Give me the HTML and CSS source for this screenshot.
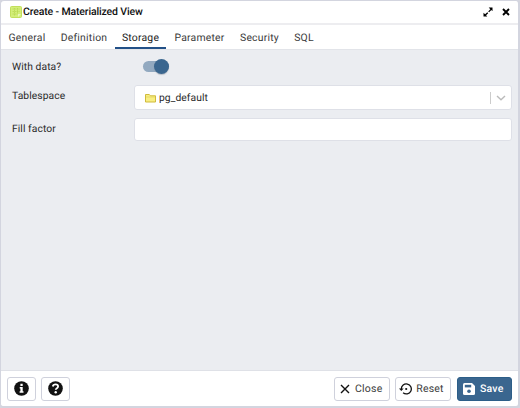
FILE: index.html
```html
<!DOCTYPE html>
<html lang="en">
<head>
<meta charset="utf-8">
<title>Create - Materialized View</title>
<link rel="stylesheet" href="styles.css">
</head>
<body>
<div class="dialog">
  <header class="titlebar">
    <svg class="view-icon" viewBox="0 0 12 12"><path d="M1.500 .5h9q1 0 1 1v9q0 1-1 1h-9q-1 0-1-1v-9q0-1 1-1z" fill="#d3ee78" stroke="#c1df5c"/><path d="M2.500 3h7M2.500 5.500h7M2.500 8h5M4.500 2v8M7.500 2v6" stroke="#b4d64d" stroke-width=".7" stroke-dasharray="1.500 .5" fill="none"/><path d="M8 11V8h3z" fill="#eaf7bd"/></svg>
    <h1 class="title">Create - Materialized View</h1>
    <button class="tool" aria-label="Maximize"><svg width="10" height="10" viewBox="0 0 10 10"><path d="M5.700 .5h3.800v3.800L8.300 3.100 6.100 5.300l-.9-.9 2.100-2.200zM.5 5.700v3.800h3.800L3.100 8.300l2.100-2.100-.9-.9-2.200 2z"/></svg></button>
    <button class="tool" aria-label="Close dialog"><svg width="8" height="8" viewBox="0 0 8 8"><path d="M1 1l6 6M7 1L1 7" stroke="#000" stroke-width="1.900"/></svg></button>
  </header>
  <nav class="tabs">
    <a class="tab general">General</a>
    <a class="tab definition">Definition</a>
    <a class="tab storage active">Storage</a>
    <a class="tab parameter">Parameter</a>
    <a class="tab security">Security</a>
    <a class="tab sql">SQL</a>
  </nav>
  <main class="form">
    <div class="row row-switch"><span class="label">With data?</span><span class="switch"><span class="knob"></span></span></div>
    <div class="row row-select"><span class="label">Tablespace</span>
      <div class="field select">
        <svg class="folder" viewBox="0 0 11 10"><path d="M.5 9V1.500h3.800l1.200 1.300h5V9z" fill="#f8ee83" stroke="#d0bb3b"/><path d="M1 4h9" stroke="#e1d15b" stroke-width=".7"/></svg>
        <span class="value">pg_default</span>
        <span class="divider"></span>
        <svg class="chevron" viewBox="0 0 10 6"><path d="M1 1l4 3.800L9 1" fill="none" stroke="#bbb" stroke-width="1.400"/></svg>
      </div>
    </div>
    <div class="row row-input"><span class="label">Fill factor</span><div class="field"></div></div>
  </main>
  <footer class="footer">
    <button class="btn icon-btn" aria-label="Information"><svg width="15" height="15" viewBox="0 0 15 15"><circle cx="7.500" cy="7.500" r="7.300" fill="#111"/><path d="M6.400 2.800h2.300V5H6.400zM5.700 6.100h3v4.200h.8v1.500H5.600v-1.500h.8V7.600h-.7z" fill="#fff"/></svg></button>
    <button class="btn icon-btn" aria-label="Help"><svg width="15" height="15" viewBox="0 0 15 15"><circle cx="7.500" cy="7.500" r="7.300" fill="#111"/><path d="M4.800 5.500c.3-1.400 1.300-2.100 2.700-2.100 1.500 0 2.600.8 2.600 2.100 0 1.700-2.400 1.600-2.400 3.300" fill="none" stroke="#fff" stroke-width="1.800"/><circle cx="7.700" cy="11.200" r="1.200" fill="#fff"/></svg></button>
    <span class="spacer"></span>
    <button class="btn close"><svg width="10" height="10" viewBox="0 0 10 10"><path d="M1 1l8 8M9 1L1 9" stroke="#111" stroke-width="1.400"/></svg><span>Close</span></button>
    <button class="btn reset"><svg width="13" height="12" viewBox="0 0 13 12"><path d="M2.300 6a5 5 0 1 1 1.800 3.800" fill="none" stroke="#111" stroke-width="1.300"/><path d="M0 5.400h4.700L2.300 8z" fill="#111"/><circle cx="7.200" cy="6" r="1.100" fill="#111"/></svg><span>Reset</span></button>
    <button class="btn save"><svg width="12" height="12" viewBox="0 0 12 12"><path d="M1.500 0H9l3 3v7.500q0 1.500-1.500 1.500h-9Q0 12 0 10.500v-9Q0 0 1.500 0z" fill="#fff"/><path d="M1.800 1.800h6.400v2.600H1.800z" fill="#3a668f"/><circle cx="6" cy="8.300" r="1.800" fill="#3a668f"/></svg><span>Save</span></button>
  </footer>
</div>
</body>
</html>
```
FILE: styles.css
```css
* { box-sizing: border-box; }
body { margin: 0; background: #d6d7e0; font-family: Roboto, sans-serif; font-size: 10.3px; color: #2a2a2a; letter-spacing: .07px; text-rendering: geometricPrecision; }
button { font: inherit; letter-spacing: inherit; color: inherit; padding: 0; border: 0; background: none; text-rendering: inherit; }
svg { display: block; flex: none; }
.dialog { height: 408px; display: flex; flex-direction: column; border: solid #d3d5df; border-width: 1px 2px 2px 1px; border-radius: 4px; background: #fff; overflow: hidden; }
.titlebar { height: 24px; flex: none; display: flex; align-items: center; padding: 0 3px 0 9px; border-bottom: 2px solid #ededf0; }
.view-icon { width: 12px; height: 12px; margin-right: 1px; }
.title { margin: 0; flex: 1; font-size: 10.5px; line-height: 22px; font-weight: 500; letter-spacing: -.14px; color: #111; }
.tool { width: 18px; height: 18px; display: grid; place-items: center; }
.tabs { height: 25px; flex: none; display: flex; border-bottom: 1px solid #e2e4e9; font-size: 10.4px; letter-spacing: .22px; }
.tab { height: 24px; line-height: 25px; text-align: center; white-space: nowrap; color: #3a3a3a; }
.general { width: 52px; }
.definition { width: 62px; }
.storage { width: 51px; }
.parameter { width: 67px; }
.security { width: 53px; }
.sql { width: 36px; }
.active { border-bottom: 2px solid #225087; color: #222; }
.form { flex: 1; background: #ebedf1; padding: 7px 6px 0 11px; }
.row { display: grid; grid-template-columns: 122px 1fr; }
.row-switch { height: 28px; }
.row-select { height: 33px; }
.label { line-height: 17px; padding-top: 1px; }
.row-select .label { padding-top: 2px; }
.row-input .label { padding-top: 2px; }
.switch { width: 26px; height: 11px; margin: 4px 0 0 9px; border-radius: 6px; background: #92a9c0; display: flex; align-items: center; justify-content: flex-end; }
.knob { width: 15px; height: 15px; border-radius: 50%; background: #3a668f; flex: none; box-shadow: 0 1px 1px #68758566; }
.field { height: 23px; background: #fff; border: 1px solid #dee0e7; border-radius: 3px; }
.select { height: 25px; display: flex; align-items: center; padding: 0 5px 0 10px; }
.folder { width: 11px; height: 10px; margin-right: 3px; }
.value { flex: 1; line-height: 23px; }
.divider { width: 1px; height: 12px; background: #ccc; margin-right: 5px; }
.chevron { width: 10px; height: 6px; }
.footer { height: 36px; flex: none; display: flex; align-items: center; padding: 0 6px 0 6px; border-top: 1px solid #dfe1e7; }
.btn { height: 24px; border: 1px solid #cfd1dc; border-radius: 3px; display: flex; align-items: center; justify-content: center; gap: 5px; font-size: 10.5px; letter-spacing: .22px; line-height: 23px; color: #3a3a3a; background: #fff; }
.icon-btn { width: 29px; margin-right: 5px; }
.spacer { flex: 1; }
.close { width: 55.5px; margin-right: 5.75px; padding-right: 1px; }
.reset { width: 55.5px; margin-right: 5.75px; padding-right: 3px; gap: 4px; }
.save { width: 55.5px; padding-right: 2px; background: #3a668f; border-color: #2c5e88; color: #fff; font-weight: 500; }
```
